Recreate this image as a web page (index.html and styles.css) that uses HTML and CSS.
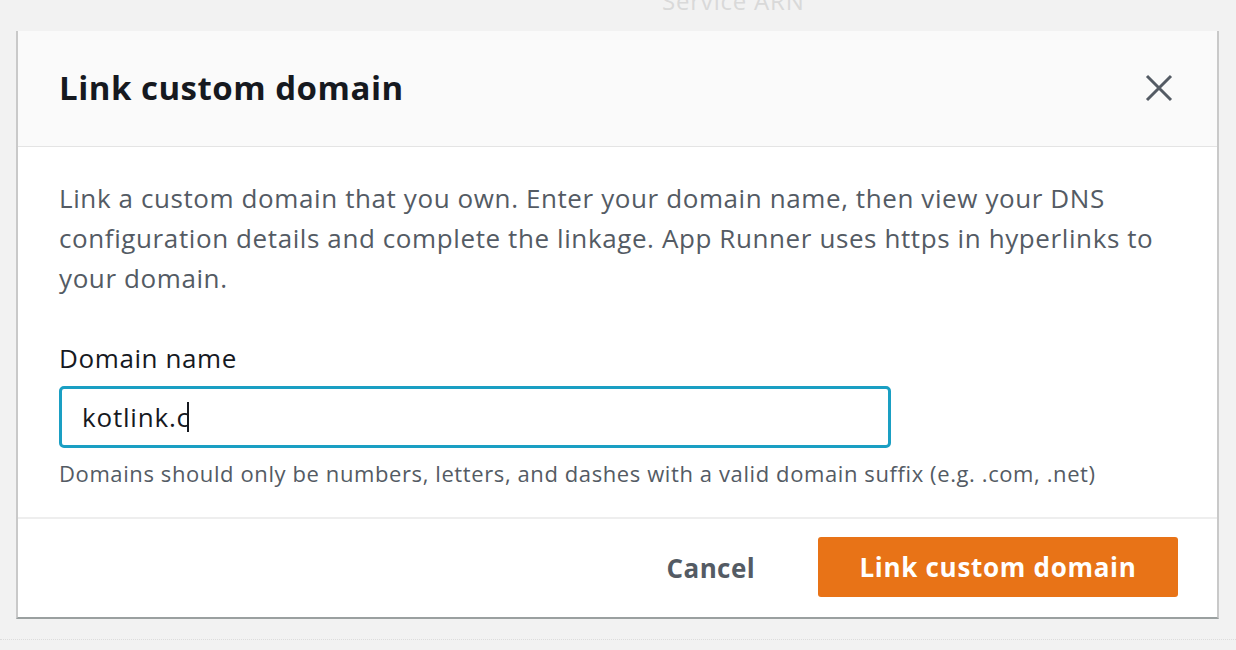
FILE: index.html
```html
<!DOCTYPE html>
<html>
<head>
<meta charset="utf-8">
<link rel="stylesheet" href="styles.css">
</head>
<body>
<div class="backdrop">
  <div class="bg-text">Service ARN</div>
  <div class="modal">
    <div class="modal-header">
      <h1 class="title">Link custom domain</h1>
      <button class="close" aria-label="Close">
        <svg width="28" height="28" viewBox="0 0 28 28"><path d="M2 2 L26 26 M26 2 L2 26" stroke="#545b64" stroke-width="3" fill="none"/></svg>
      </button>
    </div>
    <div class="modal-body">
      <p class="desc">Link a custom domain that you own. Enter your domain name, then view your DNS configuration details and complete the linkage. App Runner uses https in hyperlinks to your domain.</p>
      <label class="label">Domain name</label>
      <div class="input"><span>kotlink.c</span><span class="caret"></span></div>
      <div class="hint">Domains should only be numbers, letters, and dashes with a valid domain suffix (e.g. .com, .net)</div>
    </div>
    <div class="modal-footer">
      <button class="btn-link">Cancel</button>
      <button class="btn-primary">Link custom domain</button>
    </div>
  </div>
  <div class="bg-line"></div>
</div>
</body>
</html>
```
FILE: styles.css
```css
* { box-sizing: border-box; }
html, body { margin: 0; padding: 0; }
body {
  background: #f2f2f2;
  font-family: "Open Sans", "Noto Sans", sans-serif;
  width: 1236px;
  height: 650px;
  overflow: hidden;
}
.backdrop {
  position: relative;
  padding: 31px 17px 0 16px;
  height: 650px;
}
.bg-text {
  position: absolute;
  top: -12px;
  left: 662px;
  font-size: 24px;
  line-height: 26px;
  letter-spacing: 0.8px;
  color: #d9d9d9;
}
.bg-line {
  position: absolute;
  left: 0;
  right: 0;
  top: 639px;
  border-top: 1px dotted #dcdcdc;
}
.modal {
  position: relative;
  background: #ffffff;
  border: 2px solid #c9c9c9;
  border-top: 0;
  border-bottom: 2px solid #9aa0a0;
  height: 588px;
  display: flex;
  flex-direction: column;
}
.modal-header {
  height: 116px;
  background: #fafafa;
  border-bottom: 1px solid #e4e4e4;
  display: flex;
  align-items: center;
  justify-content: space-between;
  padding: 0 44px 0 41px;
}
.title {
  margin: 0;
  font-size: 33px;
  font-weight: 700;
  color: #16191f;
  letter-spacing: 0.5px;
  padding-bottom: 2px;
}
.close {
  background: none;
  border: 0;
  padding: 0;
  width: 28px;
  height: 28px;
  display: flex;
  margin-bottom: 1px;
}
.modal-body {
  padding: 31px 41px 0 41px;
  flex: 1;
  border-bottom: 2px solid #eeeeee;
}
.desc {
  margin: 0;
  font-size: 26px;
  line-height: 40px;
  letter-spacing: 0.6px;
  color: #545b64;
}
.label {
  display: block;
  margin-top: 44px;
  font-size: 26px;
  line-height: 32px;
  letter-spacing: 0.6px;
  color: #16191f;
}
.input {
  margin-top: 12px;
  width: 832px;
  height: 62px;
  border: 3px solid #1a9fc3;
  border-radius: 5px;
  padding: 0 20px;
  display: flex;
  align-items: center;
  font-size: 26px;
  letter-spacing: 0.8px;
  color: #16191f;
}
.caret {
  display: inline-block;
  width: 2px;
  height: 30px;
  background: #16191f;
  margin-left: -3px;
}
.hint {
  margin-top: 9px;
  font-size: 22px;
  line-height: 32px;
  letter-spacing: 0.6px;
  color: #545b64;
}
.modal-footer {
  height: 98px;
  display: flex;
  align-items: center;
  justify-content: flex-end;
  padding: 0 39px 0 41px;
  gap: 43px;
}
.btn-link {
  background: none;
  border: 0;
  font-family: inherit;
  font-size: 26px;
  font-weight: 700;
  letter-spacing: 0.4px;
  color: #545b64;
  padding: 0 20px;
}
.btn-primary {
  background: #e87317;
  border: 0;
  border-radius: 3px;
  width: 360px;
  height: 60px;
  font-family: inherit;
  font-size: 26px;
  font-weight: 700;
  letter-spacing: 0.7px;
  color: #ffffff;
  margin-bottom: 2px;
}
```
